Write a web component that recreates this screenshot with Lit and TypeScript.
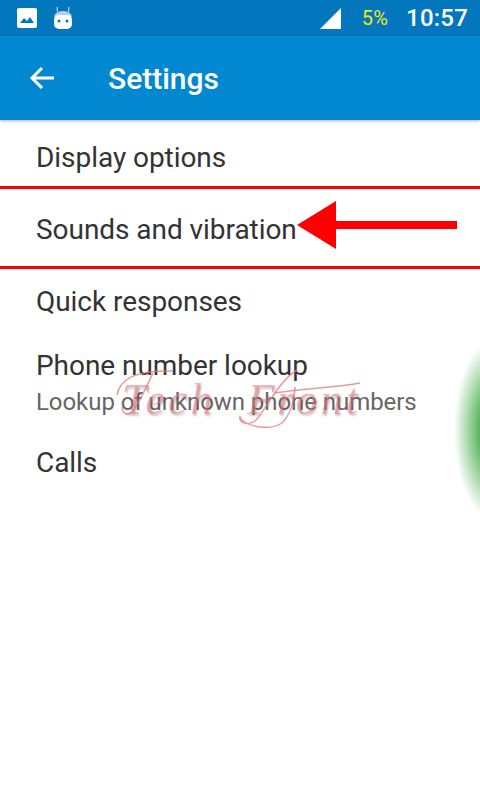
import { LitElement, html, css } from 'lit';
import { customElement } from 'lit/decorators.js';

@customElement('app-root')
export class AppRoot extends LitElement {
  static styles = css`
    :host {
      display: block;
      position: relative;
      width: 480px;
      height: 800px;
      overflow: hidden;
      background: #fff;
      font-family: Roboto, "Noto Sans", sans-serif;
    }
    .status {
      height: 36px;
      background: #0277bd;
      display: flex;
      align-items: center;
      padding: 0 12px 0 17px;
      color: #fff;
    }
    .status .pic { margin-right: 17px; }
    .status .spacer { flex: 1; }
    .status .signal { margin-right: 21px; }
    .battery { font-size: 20px; color: #f1e31c; margin-right: 18px; letter-spacing: 0.2px; }
    .clock { font-size: 24px; font-weight: 500; letter-spacing: 0.2px; }
    .bar {
      height: 84px;
      background: #0288d1;
      display: flex;
      align-items: center;
      color: #fff;
      box-shadow: 0 1px 3px rgba(0, 0, 0, 0.3);
      position: relative;
    }
    .back { width: 108px; display: flex; justify-content: center; padding-right: 24px; box-sizing: border-box; }
    .title { font-size: 30px; font-weight: 500; }
    .list { padding-top: 1px; }
    .row {
      height: 72px;
      display: flex;
      flex-direction: column;
      justify-content: center;
      padding-left: 36px;
      font-size: 28px;
      letter-spacing: -0.05px;
      color: #333;
      box-sizing: border-box;
    }
    .row.two { height: 89px; padding-top: 4px; line-height: 36px; }
    .sub { font-size: 24px; color: #666; letter-spacing: -0.06px; }
    .rule { position: absolute; left: 0; right: 0; height: 3px; background: #f00; }
    .arrow { position: absolute; left: 296px; top: 200px; }
    .mark {
      position: absolute;
      left: 122px;
      top: 374px;
      font-family: "Liberation Serif", serif;
      font-style: italic;
      font-size: 44px;
      letter-spacing: 3px;
      word-spacing: 18px;
      color: rgba(226, 120, 125, 0.55);
      text-shadow: 1px 2px 2px rgba(0, 0, 0, 0.2);
      white-space: nowrap;
    }
    .swash { position: absolute; left: 110px; top: 365px; }
    .blob {
      position: absolute;
      left: 454px;
      top: 340px;
      width: 80px;
      height: 180px;
      border-radius: 50%;
      background: radial-gradient(closest-side, #5cb860 38%, rgba(92, 184, 96, 0) 100%);
    }
  `;

  render() {
    return html`
      <div class="status">
        <svg class="pic" width="20" height="20" viewBox="0 0 20 20">
          <rect width="20" height="20" rx="2" fill="#fff" />
          <path d="M3 15l4-5 3 3 3-4 4 6z" fill="#0277bd" />
        </svg>
        <svg width="18" height="22" viewBox="0 0 18 22">
          <path d="M3.5 5L3 0M14.5 5l.5-5" stroke="#b3d4ec" stroke-width="1.2" />
          <path d="M0 10a9 6 0 0 1 18 0z" fill="#b3d4ec" />
          <rect x="0" y="8" width="18" height="14" rx="5" fill="#fff" />
          <circle cx="5" cy="14" r="1.5" fill="#0277bd" />
          <circle cx="13" cy="14" r="1.5" fill="#0277bd" />
        </svg>
        <span class="spacer"></span>
        <svg class="signal" width="21" height="21" viewBox="0 0 21 21"><path d="M21 0v21H0z" fill="#fff" /></svg>
        <span class="battery">5%</span>
        <span class="clock">10:57</span>
      </div>
      <div class="bar">
        <div class="back">
          <svg width="26" height="24" viewBox="0 0 26 24" fill="none" stroke="#fff" stroke-width="3">
            <path d="M25 12H3M13 2L3 12l10 10" />
          </svg>
        </div>
        <span class="title">Settings</span>
      </div>
      <div class="list">
        <div class="row">Display options</div>
        <div class="row">Sounds and vibration</div>
        <div class="row">Quick responses</div>
        <div class="row two"><span>Phone number lookup</span><span class="sub">Lookup of unknown phone numbers</span></div>
        <div class="row">Calls</div>
      </div>
      <div class="rule" style="top:186px"></div>
      <div class="rule" style="top:266px"></div>
      <svg class="arrow" width="162" height="50" viewBox="0 0 162 50">
        <path d="M1 25L40 1v20h121v8H40v20z" fill="#f00" />
      </svg>
      <div class="mark">Tech Front</div>
      <svg class="swash" width="260" height="70" viewBox="0 0 260 70" fill="none" stroke="rgba(226,120,125,0.75)" stroke-width="1.5">
        <path d="M7 30C10 14 25 5 63 6" />
        <path d="M43 8C35 25 28 40 22 47C18 52 12 48 12 42" />
        <path d="M187 5C170 15 155 45 147 54C140 62 128 58 130 52C135 62 160 66 172 58C180 50 185 35 185 22" />
        <path d="M165 28C190 24 230 22 250 18" />
      </svg>
      <div class="blob"></div>
    `;
  }
}
